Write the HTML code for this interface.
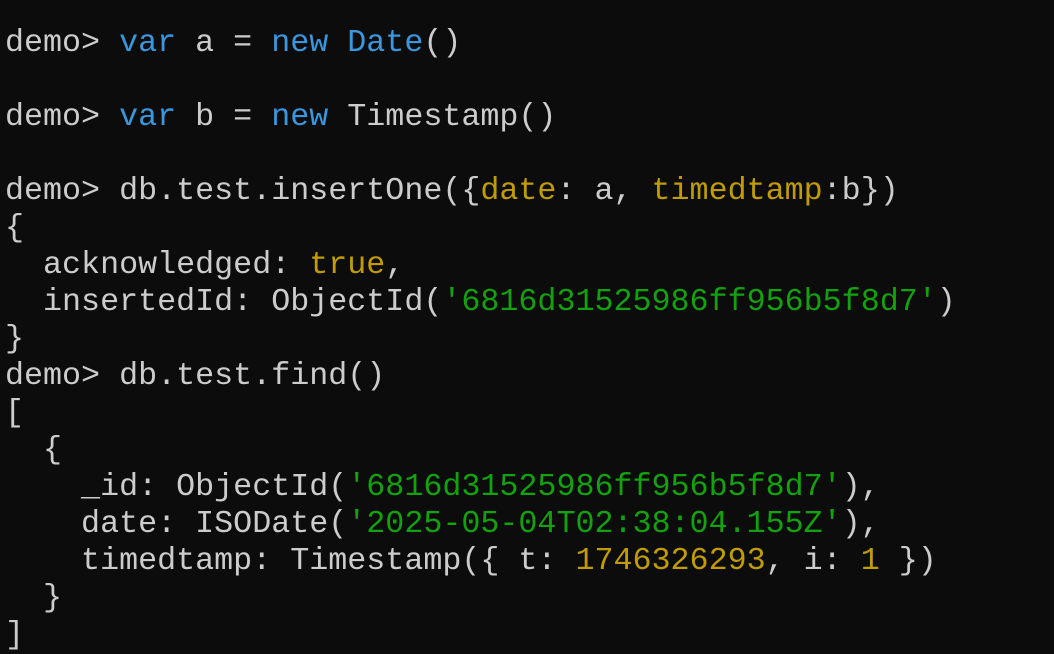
<!DOCTYPE html>
<html><head><meta charset="utf-8"><style>
html,body{margin:0;padding:0;background:#0c0c0c;width:1054px;height:651px;overflow:hidden}
pre{margin:0;position:absolute;left:5px;top:25px;font-family:"Liberation Mono","DejaVu Sans Mono",monospace;font-size:31.7px;line-height:37px;color:#cccccc;white-space:pre}
.b{color:#3a96dd}.y{color:#c19c00}.g{color:#13a10e}
</style></head><body><pre>demo&gt; <span class="b">var</span> a = <span class="b">new</span> <span class="b">Date</span>()

demo&gt; <span class="b">var</span> b = <span class="b">new</span> Timestamp()

demo&gt; db.test.insertOne({<span class="y">date</span>: a, <span class="y">timedtamp</span>:b})
{
  acknowledged: <span class="y">true</span>,
  insertedId: ObjectId(<span class="g">'6816d31525986ff956b5f8d7'</span>)
}
demo&gt; db.test.find()
[
  {
    _id: ObjectId(<span class="g">'6816d31525986ff956b5f8d7'</span>),
    date: ISODate(<span class="g">'2025-05-04T02:38:04.155Z'</span>),
    timedtamp: Timestamp({ t: <span class="y">1746326293</span>, i: <span class="y">1</span> })
  }
]</pre></body></html>
